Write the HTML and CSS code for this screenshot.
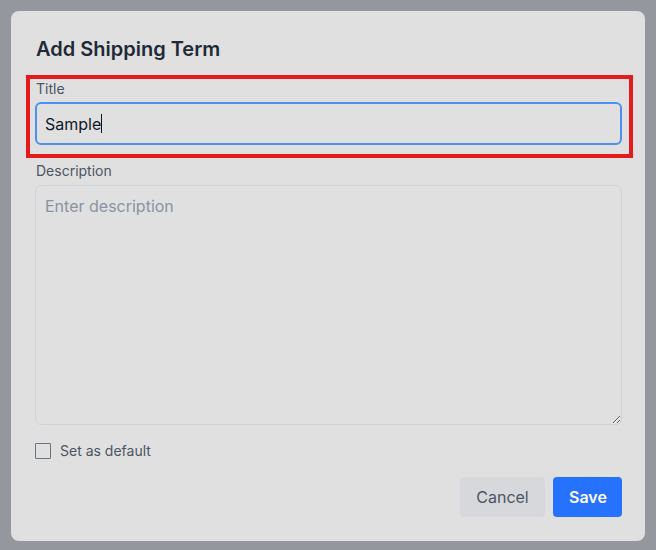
FILE: index.html
```html
<!DOCTYPE html>
<html lang="en">
<head>
<meta charset="utf-8">
<title>Add Shipping Term</title>
<link rel="stylesheet" href="styles.css">
</head>
<body>
<div class="backdrop">
  <div class="dialog">
    <h2 class="dialog-title">Add Shipping Term</h2>
    <div class="field field-highlight">
      <label class="field-label" for="title">Title</label>
      <div class="text-input" id="title"><span class="value">Sample</span><span class="caret"></span></div>
    </div>
    <div class="field">
      <label class="field-label" for="desc">Description</label>
      <textarea class="text-area" id="desc" placeholder="Enter description"></textarea>
    </div>
    <label class="check-row">
      <span class="check-box"></span>
      <span class="check-label">Set as default</span>
    </label>
    <div class="actions">
      <button class="btn btn-cancel">Cancel</button>
      <button class="btn btn-save">Save</button>
    </div>
  </div>
</div>
</body>
</html>
```

FILE: styles.css
```css
* { box-sizing: border-box; }
html, body { margin: 0; padding: 0; }
body {
  background: #94979e;
  font-family: Inter, "Noto Sans", sans-serif;
  width: 656px;
  height: 550px;
  overflow: hidden;
}
.backdrop {
  padding: 11px 11px 9px 11px;
}
.dialog {
  width: 634px;
  background: #e0e0e0;
  border-radius: 8px;
  padding: 24px 23px 24px 24px;
}
.dialog-title {
  margin: 0 0 16px 0;
  font-size: 20px;
  line-height: 28px;
  font-weight: 600;
  color: #1f2937;
  padding-left: 1px;
}
.field {
  display: flex;
  flex-direction: column;
  margin-bottom: 16px;
}
.field-highlight {
  position: relative;
}
.field-highlight::after {
  content: "";
  position: absolute;
  left: -9px;
  right: -11px;
  top: -4px;
  bottom: -13px;
  border: 4px solid #e41b1d;
  pointer-events: none;
}
.field-label {
  font-size: 14px;
  line-height: 20px;
  color: #4b5563;
  margin-bottom: 3px;
  padding-left: 1px;
}
.field + .field .field-label { margin-bottom: 4px; }
.text-input {
  height: 43px;
  border: 2px solid #4b8ff7;
  border-radius: 6px;
  padding: 0 8px;
  display: flex;
  align-items: center;
  font-size: 16px;
  color: #111827;
}
.caret {
  display: inline-block;
  width: 1px;
  height: 19px;
  background: #111;
  margin-left: 0;
}
.text-area {
  display: block;
  width: 100%;
  height: 240px;
  margin: 0;
  border: 1px solid #d0d3da;
  border-radius: 6px;
  background: transparent;
  padding: 8px 9px;
  font-family: Inter, "Noto Sans", sans-serif;
  font-size: 16px;
  line-height: 24px;
  color: #111827;
  resize: vertical;
  outline: none;
}
.text-area::placeholder { color: #8a93a2; opacity: 1; }
.check-row {
  display: flex;
  align-items: center;
  gap: 9px;
  height: 20px;
  margin-top: 1px;
}
.check-box {
  width: 16px;
  height: 16px;
  border: 1px solid #6b7280;
  border-radius: 1px;
}
.check-label {
  font-size: 14px;
  line-height: 20px;
  color: #4b5563;
}
.actions {
  display: flex;
  justify-content: flex-end;
  gap: 8px;
  margin-top: 16px;
}
.btn {
  height: 40px;
  border: none;
  border-radius: 4px;
  font-family: Inter, "Noto Sans", sans-serif;
  font-size: 16px;
  padding: 0 16px;
}
.btn-cancel {
  background: #d7d8dc;
  color: #4b5563;
  width: 85px;
}
.btn-save {
  background: #2672fe;
  color: #ffffff;
  font-weight: 600;
  width: 69px;
}
```
